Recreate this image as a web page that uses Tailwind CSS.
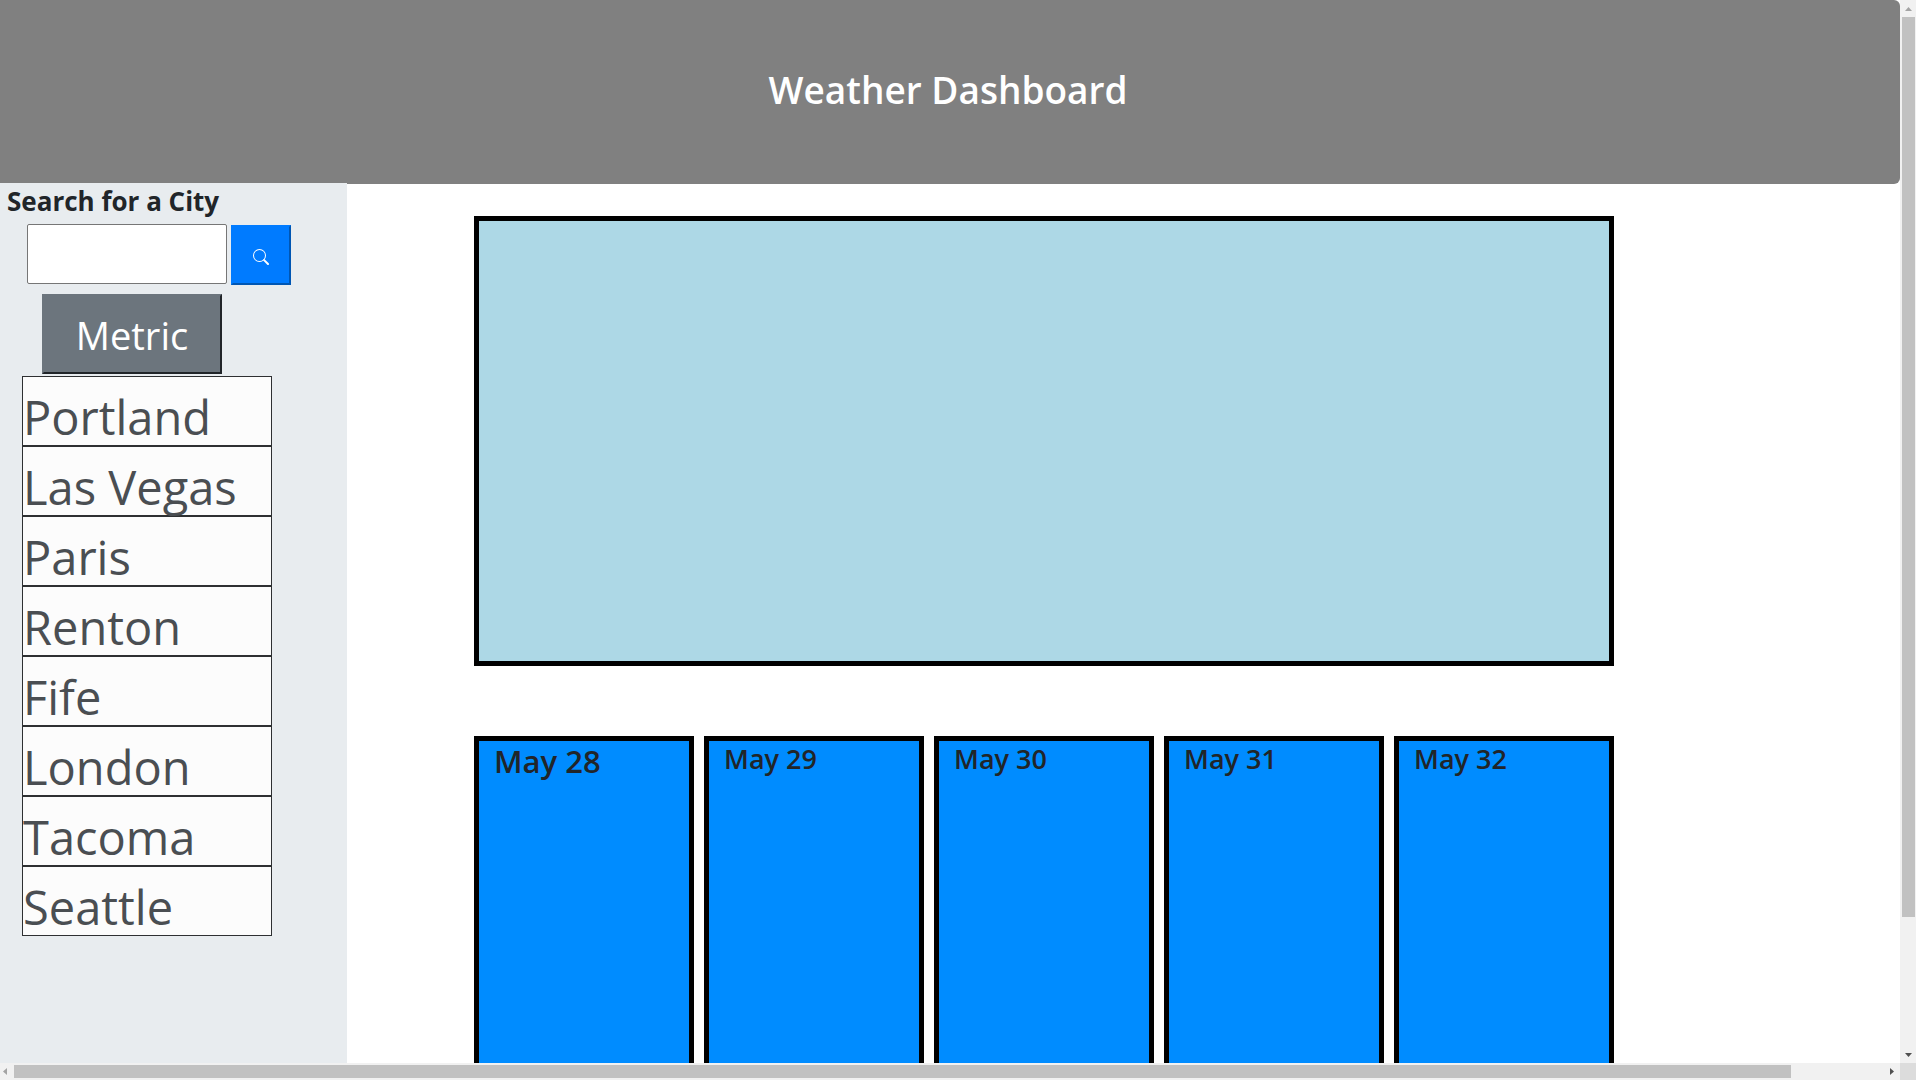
<!DOCTYPE html>
<html lang="en">
<head>
<meta charset="utf-8">
<meta name="viewport" content="width=device-width, initial-scale=1">
<title>Weather Dashboard</title>
<script src="https://cdn.jsdelivr.net/npm/@tailwindcss/browser@4"></script>
</head>
<body class="flex h-screen flex-col overflow-hidden bg-white font-['Open_Sans','Noto_Sans',sans-serif] text-[#212529]">
  <div class="flex min-h-0 flex-1">
    <div class="flex min-w-0 flex-1 flex-col overflow-hidden">
      <header class="h-[184px] shrink-0 rounded-md rounded-l-none bg-[#808080] pt-16">
        <h1 class="pr-1 text-center text-[37px] leading-[52px] font-semibold text-white">Weather Dashboard</h1>
      </header>
      <div class="-mt-px flex min-h-0 flex-1">
        <aside class="w-[347px] shrink-0 bg-[#e8ecef]">
          <form>
            <label for="city" class="block pl-[7px] text-[26px] leading-[36px] font-bold">Search for a City</label>
            <div class="mt-[5px] ml-[27px] flex gap-1">
              <input id="city" type="text" class="h-[60px] w-[200px] rounded-[2px] border border-[#767676] bg-white px-2 text-2xl">
              <button type="submit" aria-label="Search" class="mt-px flex size-[60px] items-center justify-center border-2 border-t-[#007bff] border-r-[#0056b3] border-b-[#0056b3] border-l-[#007bff] bg-[#007bff] text-white">
                <svg class="mt-1 size-4" viewBox="0 0 16 16" fill="currentColor" aria-hidden="true"><path fill-rule="evenodd" d="M10.442 10.442a1 1 0 0 1 1.415 0l3.85 3.85a1 1 0 0 1-1.414 1.415l-3.85-3.85a1 1 0 0 1 0-1.415z"/><path fill-rule="evenodd" d="M6.5 12a5.5 5.5 0 1 0 0-11 5.5 5.5 0 0 0 0 11zM13 6.500a6.500 6.500 0 1 1-13 0 6.500 6.500 0 0 1 13 0z"/></svg>
              </button>
            </div>
            <button type="button" class="mt-[9px] ml-[42px] block h-20 w-[180px] border-2 border-t-[#6c757d] border-r-[#212529] border-b-[#212529] border-l-[#6c757d] bg-[#6c757d] pt-[2px] text-[38px] leading-[52px] text-white">Metric</button>
          </form>
          <ul class="mt-[2px] ml-[22px] w-[250px] text-[47px] leading-[60px] text-[#4a4e52]">
            <li><button class="block h-[70px] w-full border border-[#2e3032] bg-[#fcfcfc] pt-[10px] text-left whitespace-nowrap">Portland</button></li>
            <li><button class="block h-[70px] w-full border border-[#2e3032] bg-[#fcfcfc] pt-[10px] text-left whitespace-nowrap">Las Vegas</button></li>
            <li><button class="block h-[70px] w-full border border-[#2e3032] bg-[#fcfcfc] pt-[10px] text-left whitespace-nowrap">Paris</button></li>
            <li><button class="block h-[70px] w-full border border-[#2e3032] bg-[#fcfcfc] pt-[10px] text-left whitespace-nowrap">Renton</button></li>
            <li><button class="block h-[70px] w-full border border-[#2e3032] bg-[#fcfcfc] pt-[10px] text-left whitespace-nowrap">Fife</button></li>
            <li><button class="block h-[70px] w-full border border-[#2e3032] bg-[#fcfcfc] pt-[10px] text-left whitespace-nowrap">London</button></li>
            <li><button class="block h-[70px] w-full border border-[#2e3032] bg-[#fcfcfc] pt-[10px] text-left whitespace-nowrap">Tacoma</button></li>
            <li><button class="block h-[70px] w-full border border-[#2e3032] bg-[#fcfcfc] pt-[10px] text-left whitespace-nowrap">Seattle</button></li>
          </ul>
        </aside>
        <main class="flex min-w-0 flex-1 flex-col pt-[33px] pr-[286px] pl-[127px]">
          <section aria-label="Current weather" class="h-[450px] shrink-0 border-5 border-black bg-[#add8e6]"></section>
          <section aria-label="Five day forecast" class="mt-[70px] grid h-[400px] shrink-0 grid-cols-5 gap-[10px] font-semibold">
            <article class="border-5 border-black bg-[#008cff] px-[15px]"><h2 class="text-[31px] leading-[40px]">May 28</h2></article>
            <article class="border-5 border-black bg-[#008cff] px-[15px]"><h2 class="text-[27px] leading-[36px]">May 29</h2></article>
            <article class="border-5 border-black bg-[#008cff] px-[15px]"><h2 class="text-[27px] leading-[36px]">May 30</h2></article>
            <article class="border-5 border-black bg-[#008cff] px-[15px]"><h2 class="text-[27px] leading-[36px]">May 31</h2></article>
            <article class="border-5 border-black bg-[#008cff] px-[15px]"><h2 class="text-[27px] leading-[36px]">May 32</h2></article>
          </section>
        </main>
      </div>
    </div>
    <div class="flex w-4 shrink-0 flex-col bg-[#f1f1f1] pr-px pl-[2px]" aria-hidden="true">
      <div class="flex h-[17px] shrink-0 items-center justify-center text-[#a3a3a3]"><svg class="h-1 w-[7px]" viewBox="0 0 7 4" fill="currentColor"><path d="M0 4 3.500 0 7 4z"/></svg></div>
      <div class="flex-1"><div class="h-[87.5%] bg-[#c1c1c1]"></div></div>
      <div class="flex h-[17px] shrink-0 items-center justify-center text-[#505050]"><svg class="h-1 w-[7px]" viewBox="0 0 7 4" fill="currentColor"><path d="M0 0h7L3.500 4z"/></svg></div>
    </div>
  </div>
  <div class="flex h-[17px] shrink-0 bg-[#f1f1f1]" aria-hidden="true">
    <div class="flex w-[14px] shrink-0 items-center pl-[3px] text-[#a3a3a3]"><svg class="h-[7px] w-1" viewBox="0 0 4 7" fill="currentColor"><path d="M4 0v7L0 3.500z"/></svg></div>
    <div class="flex-1 pt-[2px] pb-[2px]"><div class="h-full w-[94.9%] bg-[#c1c1c1]"></div></div>
    <div class="flex w-[14px] shrink-0 items-center pl-1 text-[#505050]"><svg class="h-[7px] w-1" viewBox="0 0 4 7" fill="currentColor"><path d="M0 0v7L4 3.500z"/></svg></div>
    <div class="w-4 shrink-0 bg-[#dcdcdc]"></div>
  </div>
</body>
</html>
